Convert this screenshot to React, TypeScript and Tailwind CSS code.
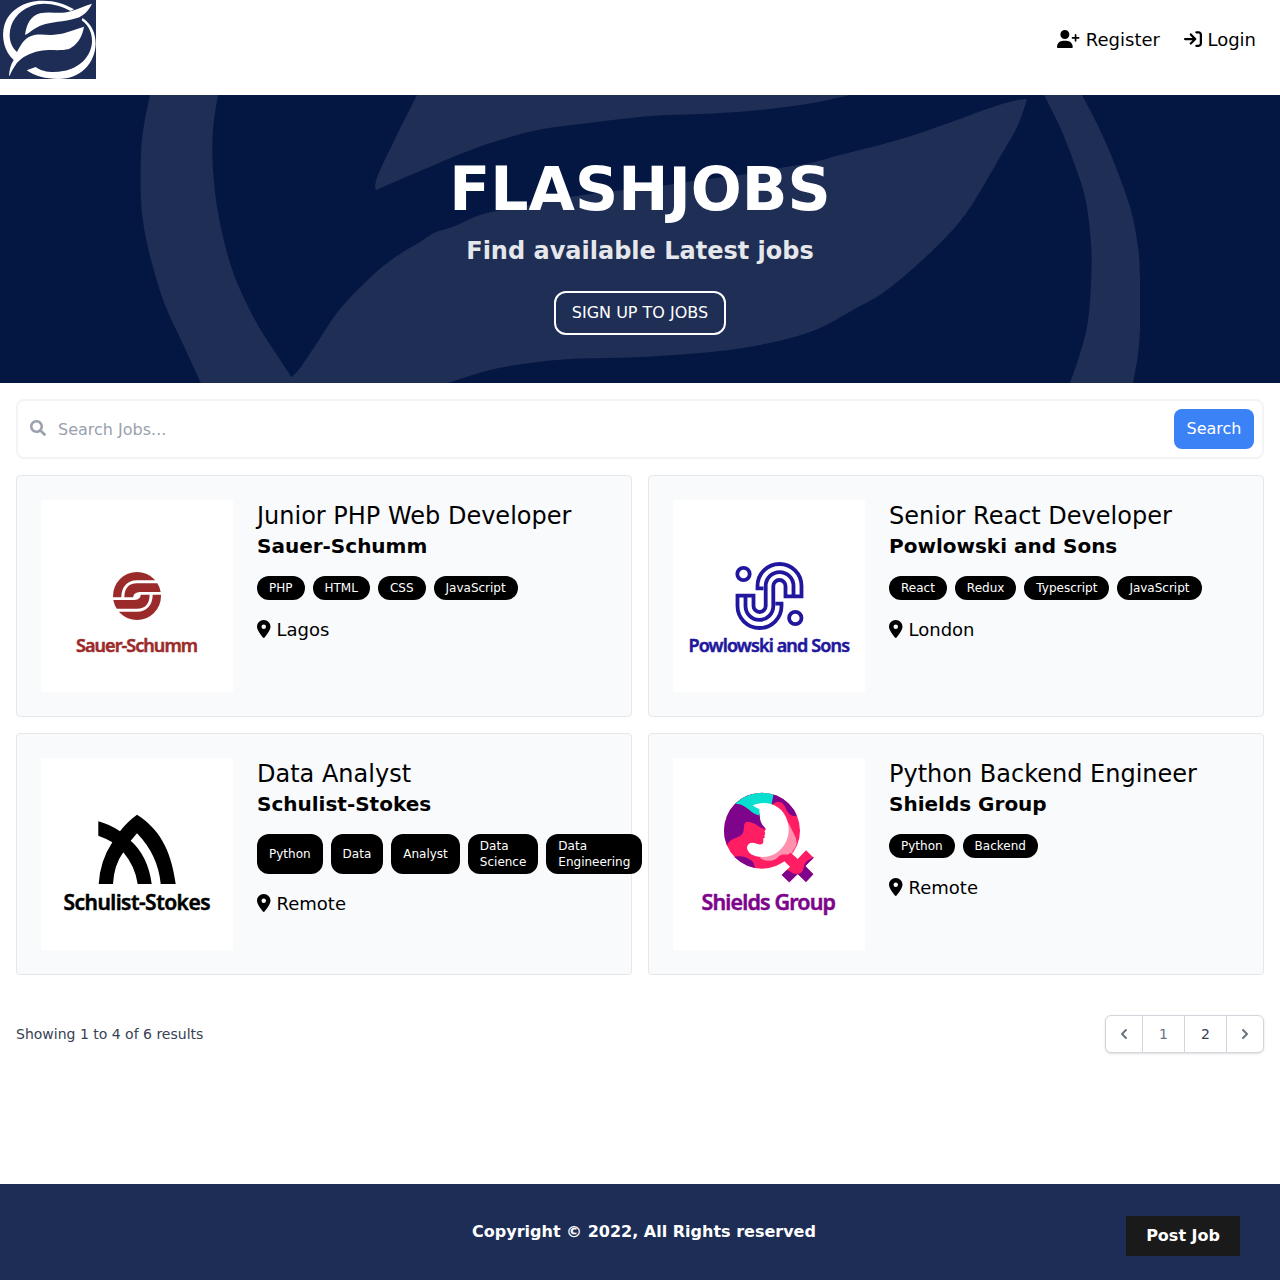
import React from "react";
import { FaSearch } from "react-icons/fa";
import { FaLocationDot, FaArrowRightToBracket, FaUserPlus } from "react-icons/fa6";

function BrandMark() {
  return (
    <svg viewBox="0 0 288 237" className="h-[79px] w-24" aria-label="FlashJobs">
      <rect width="288" height="237" fill="#1d2d55" />
      <g fill="#fff">
        <path d="M27 227C28 209 33 192 41 180C13 155 3 112 13 76C26 30 74 1 129 2C164 2 195 12 222 28L212 33C175 13 132 4 94 18C52 33 29 69 29 105C29 127 38 145 51 156C65 130 75 111 103 105C129 101 146 108 174 103C207 98 226 87 252 80C247 111 232 134 207 147C180 154 150 147 119 153C88 159 65 172 50 190C40 204 34 216 29 227Z" />
        <path d="M75 105C80 72 91 48 120 40C151 33 180 44 212 34C236 27 253 17 276 11C266 31 252 48 228 55C193 66 150 66 127 75C105 82 92 97 75 105Z" />
        <path d="M248 54C275 73 287 99 287 132C285 190 242 237 175 237C138 237 103 228 80 211L107 201C128 217 161 219 190 213C240 204 274 168 276 125C277 99 266 77 245 61Z" />
      </g>
    </svg>
  );
}

type Point = [number, number];

// Joins smooth runs of points into one closed outline; corners fall between runs.
function outline(runs: Point[][]): string {
  let d = "";
  runs.forEach((run, r) => {
    d += `${r === 0 ? "M" : "L"}${run[0][0]} ${run[0][1]}`;
    for (let i = 0; i < run.length - 1; i++) {
      const p0 = run[Math.max(i - 1, 0)];
      const p1 = run[i];
      const p2 = run[i + 1];
      const p3 = run[Math.min(i + 2, run.length - 1)];
      d += `C${p1[0] + (p2[0] - p0[0]) / 6} ${p1[1] + (p2[1] - p0[1]) / 6} ${p2[0] - (p3[0] - p1[0]) / 6} ${p2[1] - (p3[1] - p1[1]) / 6} ${p2[0]} ${p2[1]}`;
    }
  });
  return d + "Z";
}

const lowerLeaf: Point[][] = [
  [[201, 288], [183, 249], [165, 210], [153, 172], [145, 138], [141, 105], [141, 58], [144, 30], [150, 0]],
  [[218, 0], [213, 35], [213, 75], [219, 123], [233, 177], [255, 225], [277, 260], [291.5, 282]],
  [[291.5, 282], [300, 273], [317, 248], [340, 214], [373, 180], [397, 161], [420, 147]],
  [[420, 147], [435, 137.5], [455, 131], [483, 119], [530, 110], [570, 102], [623, 95], [663, 90.5], [700, 85], [740, 80], [780, 73], [810, 68], [840, 60], [887, 48], [920, 38], [957, 25], [990, 13], [1013, 6], [1025, 4]],
  [[1027, 5], [1017, 32], [1000, 62], [967, 117], [933, 155], [887, 195], [853, 215], [820, 233], [787, 244], [743, 253], [700, 258], [640, 262], [605, 263], [570, 264], [530, 268], [490, 275], [448, 288]],
];
const upperLeaf: Point[][] = [
  [[417, 0], [393, 48], [378, 80], [375, 92]],
  [[376, 95], [463, 58], [507, 43], [543, 34], [597, 27], [650, 21], [700, 19], [750, 16], [807, 9], [850, 0]],
];
const rightRing: Point[][] = [
  [[1082, 0], [1098, 31], [1113, 65], [1130, 112], [1138, 152], [1140, 182]],
  [[1140, 235], [1138, 260], [1133, 288]],
  [[1070, 288], [1078, 265], [1087, 232], [1091, 190], [1091, 148], [1085, 102], [1073, 65], [1060, 32], [1044, 0]],
];

function HeroBackdrop() {
  return (
    <svg viewBox="0 0 1280 288" className="absolute inset-0 h-full w-full" fill="#1f2e55" aria-hidden>
      <path d={outline(lowerLeaf)} />
      <path d={outline(upperLeaf)} />
      <path d={outline(rightRing)} />
    </svg>
  );
}

function LogoText({ x, width, size, color, children }: { x: number; width: number; size: number; color: string; children: string }) {
  return (
    <text x={x} y={152} textLength={width} lengthAdjust="spacing" fill={color} stroke={color} strokeWidth="0.5" fontFamily="'Noto Sans', 'Open Sans', sans-serif" fontWeight="600" fontSize={size}>
      {children}
    </text>
  );
}

function SauerBands() {
  return (
    <>
      <path d="M70 97.3V70H122V80.3H96C86 80.3 80.5 87 80.3 97.3Z" />
      <path d="M83.4 97.3C83.4 88.5 87.5 83.3 96 83.3H122V92H101C95 92 92.5 93.5 92.3 97.3Z" />
    </>
  );
}

function SauerLogo() {
  return (
    <svg viewBox="0 0 192 192" className="h-48 w-48 shrink-0 bg-white">
      <defs>
        <clipPath id="sauer-disc"><circle cx="96" cy="96" r="24" /></clipPath>
      </defs>
      <g fill="#9b2b2b" clipPath="url(#sauer-disc)">
        <SauerBands />
        <g transform="rotate(180 96 96)"><SauerBands /></g>
      </g>
      <LogoText x={35} width={122} size={18} color="#9b2b2b">Sauer-Schumm</LogoText>
    </svg>
  );
}

function PowlowskiLogo() {
  return (
    <svg viewBox="0 0 192 192" className="h-48 w-48 shrink-0 bg-white">
      <g fill="none" stroke="#21179e" strokeWidth="3.8">
        <circle cx="70.5" cy="74" r="6.2" />
        <circle cx="122.3" cy="118" r="6.2" />
        <path d="M90.5 88.3H84.5V86A22 22 0 0 1 128.5 86V96.4H112.5V86.1A6.1 6.1 0 0 0 100.3 86.1V106A13.9 13.9 0 0 1 72.5 106V96" />
        <path d="M102.3 103.7H108.5V106A22 22 0 0 1 64.5 106V95.6H80.5V105.9A6.1 6.1 0 0 0 92.7 105.9V86A13.9 13.9 0 0 1 120.5 86V96" />
      </g>
      <LogoText x={15.5} width={161.5} size={18} color="#21179e">Powlowski and Sons</LogoText>
    </svg>
  );
}

function SchulistLogo() {
  return (
    <svg viewBox="0 0 192 192" className="h-48 w-48 shrink-0 bg-white">
      <path d="M57.3 63.3Q68 66 79 73.3Q86 64 96 56.7C117 70 130 90 134.7 126H119.7Q117 97 96 75.3L89.7 82.7Q107 98 110.7 126H96.7Q94 108 82.3 94.3Q73 107 72 126H57.7Q59 103 71.3 84.3Q64 80 57.3 77.7Z" />
      <LogoText x={22.5} width={147} size={21} color="#000">Schulist-Stokes</LogoText>
    </svg>
  );
}

function ShieldsLogo() {
  return (
    <svg viewBox="0 0 192 192" className="h-48 w-48 shrink-0 bg-white">
      <defs>
        <clipPath id="shields-ring"><circle cx="89" cy="72.7" r="38" /></clipPath>
        <clipPath id="shields-cross"><path d="M133 92.3L140.7 99.7L132.3 108L140.3 116.3L133 124L124.7 116L116.3 124.3L108.7 117L117 108.7L110 102L117.5 94.5L124.7 101Z" /></clipPath>
      </defs>
      <g clipPath="url(#shields-ring)">
        <rect x="50" y="34" width="80" height="80" fill="#ff1e63" />
        <path d="M50 34H78L92 56V71C86 70 84 66 80 65.3C75 63 71.5 63 71 68C70.5 73 71 76 66 78.5C60 81 56 82 53 89L48 90Z" fill="#7d048b" />
        <path d="M61 45.5V32H102L98.7 48L86.3 56V57.5C80 56 77 52 73 49.5C69 46.5 66 46 61 45.5Z" fill="#08dfcf" />
        <path d="M101 34H128V56L122 58C118 58 116 56 113.5 52C111.5 47 109 43 104 44C101 44.5 100 46 98.3 48Z" fill="#7d048b" />
        <path d="M115 64L119 72C122 78 126 84 122 90C120 93 119 95 118.7 96.5C113 97 109 95 105.5 98.5C101 104 94 104 86.3 100L106 89Z" fill="#ff91af" />
        <path d="M60 99C66 97.5 71 98 75 100.5C79 103 81 103 82 111H60Z" fill="#7d048b" />
        <path d="M79.7 47.5C84 45 92 44 98 46C109 49 115.7 60 115.7 71.5C115.7 87 104 99 89.5 99C80 99 74 94.5 74 89.5C74.5 84.5 79 83.8 83 85.5C87 87 89.5 87 90.3 84V80.3L92 79.5L91.3 77.5L92.3 75.5L91.5 73.5L93 71C90 68 87.5 64.5 87 60.5L86.3 51C83.5 50 82 49 79.7 47.5Z" fill="#fff" />
      </g>
      <g clipPath="url(#shields-cross)">
        <rect x="105" y="90" width="40" height="40" fill="#ff1e63" />
        <path d="M105 116L113 112C117 112 119 116 123 116C129 116 130 113 131 108C132 103 136 102 142 98V128H105Z" fill="#7d048b" />
      </g>
      <LogoText x={28.5} width={134.5} size={21.5} color="#7d048b">Shields Group</LogoText>
    </svg>
  );
}

const jobs = [
  { title: "Junior PHP Web Developer", company: "Sauer-Schumm", tags: ["PHP", "HTML", "CSS", "JavaScript"], place: "Lagos", Logo: SauerLogo },
  { title: "Senior React Developer", company: "Powlowski and Sons", tags: ["React", "Redux", "Typescript", "JavaScript"], place: "London", Logo: PowlowskiLogo },
  { title: "Data Analyst", company: "Schulist-Stokes", tags: ["Python", "Data", "Analyst", "Data Science", "Data Engineering"], place: "Remote", Logo: SchulistLogo },
  { title: "Python Backend Engineer", company: "Shields Group", tags: ["Python", "Backend"], place: "Remote", Logo: ShieldsLogo },
];

function Chevron({ d }: { d: string }) {
  return (
    <svg className="h-5 w-5" viewBox="0 0 20 20" fill="currentColor">
      <path fillRule="evenodd" clipRule="evenodd" d={d} />
    </svg>
  );
}

export default function App() {
  return (
    <div className="flex h-[1280px] flex-col bg-white font-['DejaVu_Sans',sans-serif] text-base text-black">
      <nav className="mb-4 flex h-[79px] shrink-0 items-center justify-between">
        <BrandMark />
        <div className="mr-6 flex gap-6 text-lg">
          <a className="flex items-center gap-1.5"><FaUserPlus className="mb-0.5 h-[18px] w-[22.5px]" /><span>Register</span></a>
          <a className="flex items-center gap-[5.5px]"><FaArrowRightToBracket className="mb-px h-[18px] w-[18px]" /><span>Login</span></a>
        </div>
      </nav>
      <section className="relative flex h-72 shrink-0 flex-col items-center justify-center bg-[#041742] pt-4 text-center text-white">
        <HeroBackdrop />
        <div className="relative">
          <h1 className="text-6xl font-bold uppercase leading-[60px]">FlashJobs</h1>
          <p className="my-4 text-2xl font-bold text-gray-200">Find available Latest jobs</p>
          <a className="mt-2 inline-block rounded-xl border-2 border-white px-4 py-2 uppercase">Sign up to jobs</a>
        </div>
      </section>
      <main className="flex flex-col">
        <form className="m-4 flex h-15 items-center rounded-lg border-2 border-gray-100 pl-3 pr-2">
          <FaSearch className="mb-[3px] h-4 w-4 text-gray-400" />
          <span className="ml-3 flex-1 pt-0.5 text-gray-400">Search Jobs...</span>
          <button className="h-10 w-20 rounded-lg bg-[#3b82f6] text-white">Search</button>
        </form>
        <div className="mx-4 grid grid-cols-2 gap-4">
          {jobs.map(({ title, company, tags, place, Logo }) => (
            <article key={title} className="flex h-[242px] min-w-0 gap-6 rounded border border-gray-200 bg-[#f9fafc] p-6">
              <Logo />
              <div className="min-w-0 flex-1">
                <h3 className="text-2xl">{title}</h3>
                <div className="mb-4 text-xl font-bold leading-7">{company}</div>
                <ul className="flex gap-2 text-xs text-white">
                  {tags.map((t) => (
                    <li key={t} className="flex items-center rounded-xl bg-black px-3 py-1">{t}</li>
                  ))}
                </ul>
                <div className="mt-4 flex items-center gap-1.5 text-lg">
                  <FaLocationDot className="mb-0.5 h-[18px] w-[13.5px]" />{place}
                </div>
              </div>
            </article>
          ))}
        </div>
        <div className="mx-4 mt-10 flex items-center justify-between text-sm text-gray-700">
          <p>Showing 1 to 4 of 6 results</p>
          <div className="flex h-[38px] divide-x divide-gray-300 rounded-md border border-gray-300 bg-white font-medium text-gray-500 shadow-sm">
            <span className="flex w-[37px] items-center justify-center"><Chevron d="M12.707 5.293a1 1 0 010 1.414L9.414 10l3.293 3.293a1 1 0 01-1.414 1.414l-4-4a1 1 0 010-1.414l4-4a1 1 0 011.414 0z" /></span>
            <span className="flex w-[42px] items-center justify-center">1</span>
            <span className="flex w-[42px] items-center justify-center text-gray-700">2</span>
            <span className="flex w-9 items-center justify-center"><Chevron d="M7.293 14.707a1 1 0 010-1.414L10.586 10 7.293 6.707a1 1 0 011.414-1.414l4 4a1 1 0 010 1.414l-4 4a1 1 0 01-1.414 0z" /></span>
          </div>
        </div>
      </main>
      <footer className="relative mt-auto flex h-24 shrink-0 items-center justify-center bg-[#1d2d55] font-bold text-white">
        <p className="ml-2">Copyright © 2022, All Rights reserved</p>
        <a className="absolute right-10 top-8 bg-[#1a1a1a] px-5 py-2">Post Job</a>
      </footer>
    </div>
  );
}
